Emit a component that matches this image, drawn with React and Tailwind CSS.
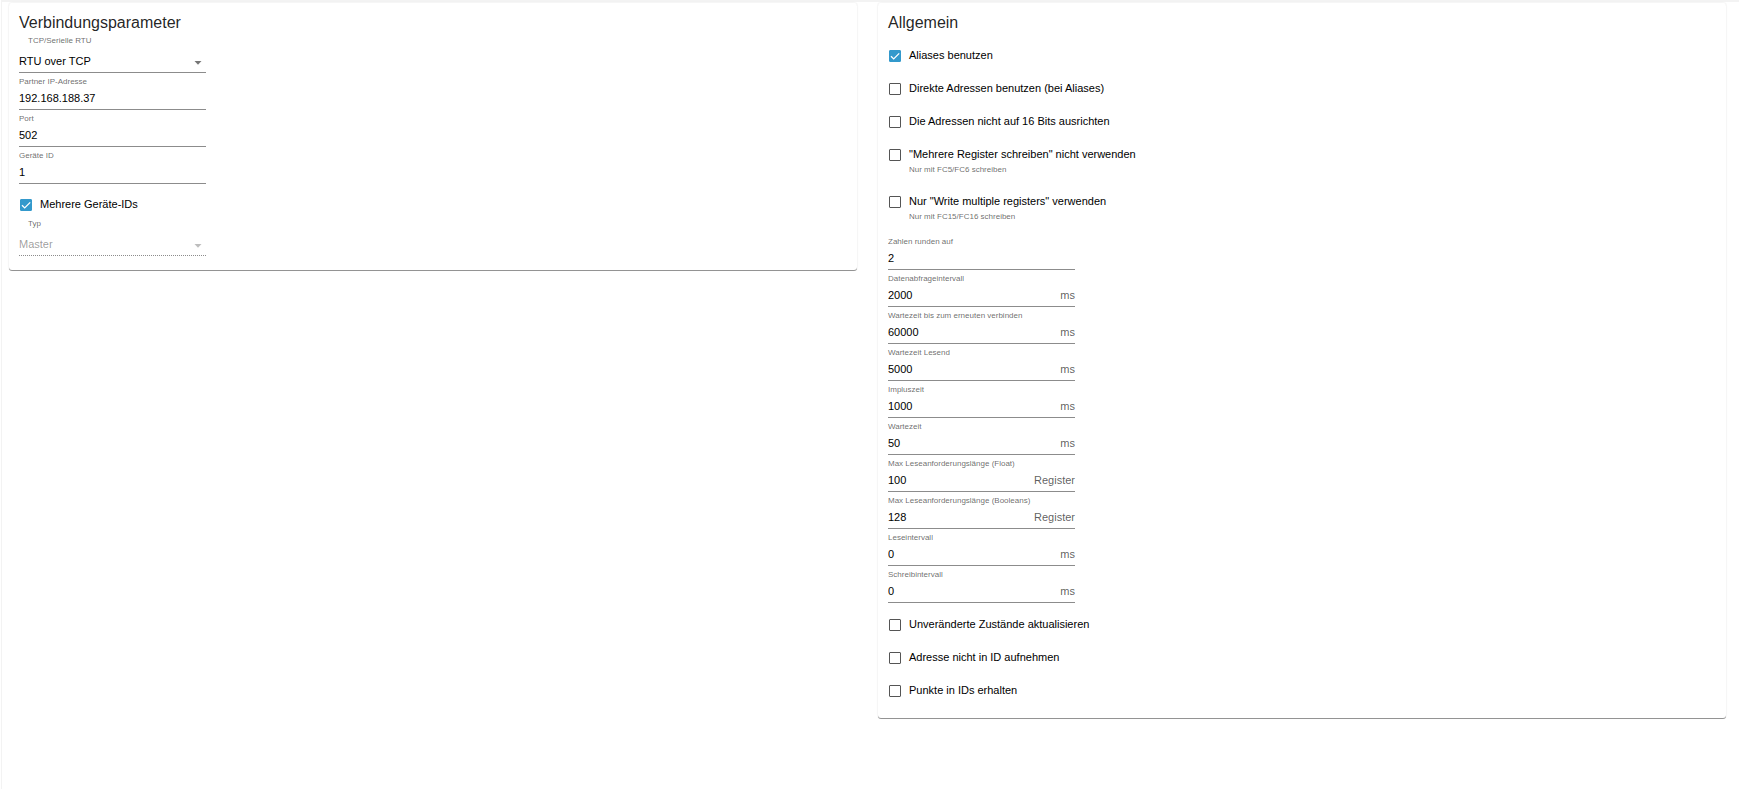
import React, { useState } from 'react';

const connectionFields = [
  { id: 'bind', label: 'Partner IP-Adresse', value: '192.168.188.37' },
  { id: 'port', label: 'Port', value: '502' },
  { id: 'deviceId', label: 'Geräte ID', value: '1' },
];

const topOptions = [
  { id: 'useAliases', label: 'Aliases benutzen', checked: true },
  { id: 'directAddresses', label: 'Direkte Adressen benutzen (bei Aliases)' },
  { id: 'doNotRound', label: 'Die Adressen nicht auf 16 Bits ausrichten' },
  {
    id: 'noMultipleRegs',
    label: '"Mehrere Register schreiben" nicht verwenden',
    help: 'Nur mit FC5/FC6 schreiben',
  },
  {
    id: 'onlyMultipleRegs',
    label: 'Nur "Write multiple registers" verwenden',
    help: 'Nur mit FC15/FC16 schreiben',
  },
];

const generalFields = [
  { id: 'round', label: 'Zahlen runden auf', value: '2' },
  { id: 'poll', label: 'Datenabfrageintervall', value: '2000', unit: 'ms' },
  { id: 'recon', label: 'Wartezeit bis zum erneuten verbinden', value: '60000', unit: 'ms' },
  { id: 'timeout', label: 'Wartezeit Lesend', value: '5000', unit: 'ms' },
  { id: 'pulse', label: 'Impluszeit', value: '1000', unit: 'ms' },
  { id: 'wait', label: 'Wartezeit', value: '50', unit: 'ms' },
  { id: 'maxBlock', label: 'Max Leseanforderungslänge (Float)', value: '100', unit: 'Register' },
  { id: 'maxBool', label: 'Max Leseanforderungslänge (Booleans)', value: '128', unit: 'Register' },
  { id: 'readInterval', label: 'Leseintervall', value: '0', unit: 'ms' },
  { id: 'writeInterval', label: 'Schreibintervall', value: '0', unit: 'ms' },
];

const bottomOptions = [
  { id: 'alwaysUpdate', label: 'Unveränderte Zustände aktualisieren' },
  { id: 'noAddressInId', label: 'Adresse nicht in ID aufnehmen' },
  { id: 'preserveDots', label: 'Punkte in IDs erhalten' },
];

const Card = ({ title, children }) => (
  <section className="rounded-[3px] bg-white px-[10px] pt-[9px] pb-[11px] shadow-[0_1px_0_0_rgba(0,0,0,0.4),0_0_1px_1px_rgba(0,0,0,0.04)]">
    <h2 className="text-[16px] leading-[22px] text-black/87">{title}</h2>
    {children}
  </section>
);

const TextField = ({ id, label, value, unit }) => {
  const [text, setText] = useState(value);

  return (
    <div className="w-[187px] border-b border-[#8c8c8c] pt-[3px]">
      <label htmlFor={id} className="block text-[8px] leading-[12px] whitespace-nowrap text-black/60">
        {label}
      </label>
      <div className="flex h-[21px] items-center text-[11px]">
        <input
          id={id}
          type="text"
          value={text}
          onChange={(e) => setText(e.target.value)}
          className="min-w-0 flex-1 text-black outline-none"
        />
        {unit && <span className="text-black/65">{unit}</span>}
      </div>
    </div>
  );
};

const SelectField = ({ id, label, options, disabled }) => (
  <div className="w-[187px]">
    <label htmlFor={id} className="block pl-[9px] text-[8px] leading-[14px] text-black/60">
      {label}
    </label>
    <div
      className={
        disabled
          ? 'relative border-b border-dotted border-[#8c8c8c] pt-[3px] text-black/40'
          : 'relative border-b border-[#8c8c8c] pt-[3px] text-black'
      }
    >
      <select
        id={id}
        disabled={disabled}
        className="block h-[21px] w-full appearance-none bg-transparent text-[11px] opacity-100 outline-none"
      >
        {options.map((option) => (
          <option key={option}>{option}</option>
        ))}
      </select>
      <svg
        className={
          disabled
            ? 'pointer-events-none absolute right-[4px] bottom-[7px] h-1 w-2 text-black/26'
            : 'pointer-events-none absolute right-[4px] bottom-[7px] h-1 w-2 text-black/54'
        }
        viewBox="0 0 8 4"
      >
        <path d="M0.5 0h7L4 3.8z" fill="currentColor" />
      </svg>
    </div>
  </div>
);

const CheckOption = ({ id, label, help, checked = false }) => {
  const [on, setOn] = useState(checked);

  return (
    <div className={help ? 'pb-2' : ''}>
      <div className="flex h-[33px] items-center pl-px">
        <span className="relative h-3 w-3">
          <input
            id={id}
            type="checkbox"
            checked={on}
            onChange={() => setOn(!on)}
            className="block h-3 w-3 appearance-none rounded-[1px] border border-[#555] bg-white checked:border-[#3399cc] checked:bg-[#3399cc]"
          />
          {on && (
            <svg className="pointer-events-none absolute inset-0 h-3 w-3" viewBox="0 0 12 12">
              <path d="M2 6.2l2.7 2.7L10.2 3.4" fill="none" stroke="#fff" strokeWidth="1.3" />
            </svg>
          )}
        </span>
        <label htmlFor={id} className="pl-2 text-[11px] text-black">
          {label}
        </label>
      </div>
      {help && <p className="-mt-2 pl-[21px] text-[8px] leading-[14px] text-black/60">{help}</p>}
    </div>
  );
};

const App = () => {
  return (
    <main className="ml-px min-h-screen border-t-2 border-l border-[#f3f3f3] bg-white pt-px pr-[13px] pl-[7px] font-['Liberation_Sans',Arial,sans-serif]">
      <div className="grid grid-cols-2 items-start gap-[21px]">
        <Card title="Verbindungsparameter">
          <SelectField id="mode" label="TCP/Serielle RTU" options={['RTU over TCP', 'TCP', 'Seriell']} />
          {connectionFields.map((field) => (
            <TextField key={field.id} {...field} />
          ))}
          <div className="pt-1">
            <CheckOption id="multiDevice" label="Mehrere Geräte-IDs" checked />
          </div>
          <div className="-mt-1 pb-[3px]">
            <SelectField id="type" label="Typ" options={['Master', 'Slave']} disabled />
          </div>
        </Card>

        <Card title="Allgemein">
          <div className="pt-[5px] pb-px">
            {topOptions.map((option) => (
              <CheckOption key={option.id} {...option} />
            ))}
          </div>
          {generalFields.map((field) => (
            <TextField key={field.id} {...field} />
          ))}
          <div className="pt-[5px]">
            {bottomOptions.map((option) => (
              <CheckOption key={option.id} {...option} />
            ))}
          </div>
        </Card>
      </div>
    </main>
  );
};

export default App;
